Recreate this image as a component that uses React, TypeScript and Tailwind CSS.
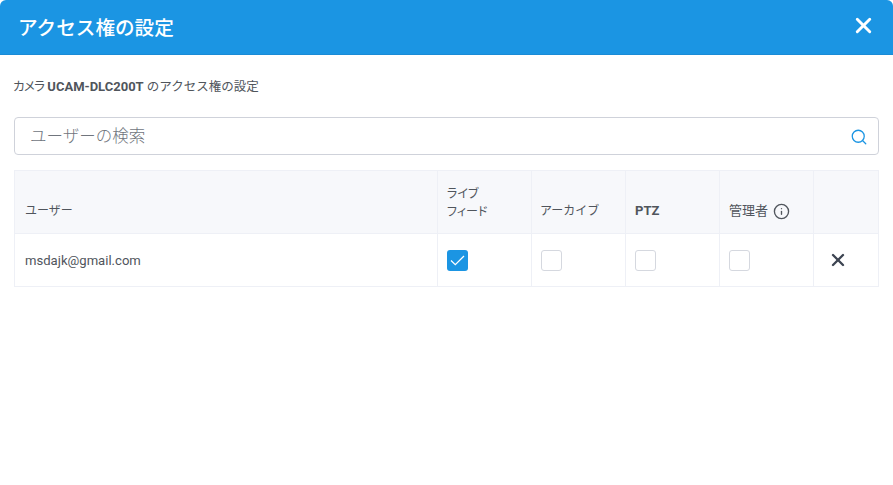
import { Info, Search, X } from 'lucide-react';

const CJK = `font-['Roboto','Noto_Sans_CJK_JP',sans-serif]`;

function Checkbox({ checked }: { checked?: boolean }) {
  return checked ? (
    <div className="w-[21px] h-[21px] rounded-[3px] bg-[#1b95e3] flex items-center justify-center">
      <svg width="15" height="11" viewBox="0 0 15 11" fill="none" stroke="white" strokeWidth="1.3">
        <path d="M1 5.5 L5.3 9.6 L14 1" />
      </svg>
    </div>
  ) : (
    <div className="w-[21px] h-[21px] rounded-[3px] bg-white border border-[#d5d8df]" />
  );
}

const COLUMNS = [
  { id: 'live', checked: true },
  { id: 'archive', checked: false },
  { id: 'ptz', checked: false },
  { id: 'admin', checked: false },
];

export default function App() {
  return (
    <div className={`w-[893px] h-[485px] bg-white overflow-hidden rounded-t-[6px] text-[#50555c] ${CJK}`}>
      {/* Header */}
      <div className="h-[55px] bg-[#1b95e3] border-b border-[#1a8bd6] flex items-center justify-between pl-[18px] pr-[17px]">
        <h1 className="text-[19.6px] font-medium text-white pt-[3px]">アクセス権の設定</h1>
        <X size={25} strokeWidth={2.8} className="text-white -mt-[4px]" />
      </div>

      <div className="px-[14px]">
        <p className="text-[12.5px] h-[16px] leading-[16px] mt-[24px] -ml-[1px]">
          <span className="[font-feature-settings:'palt'] tracking-[-0.7px]">カメラ</span>{' '}
          <span className="font-bold text-[13px]">UCAM-DLC200T</span> のアクセス権の設定
        </p>

        {/* Search */}
        <div className="mt-[22px] h-[38px] rounded-[4px] border border-[#cfd2da] flex items-center justify-between pl-[15px] pr-[10px]">
          <span className="text-[16.5px] font-light text-[#70757d] pt-[2px]">ユーザーの検索</span>
          <Search size={18} strokeWidth={1.7} className="text-[#1b95e3] mt-[1px]" />
        </div>

        {/* Table */}
        <div className="mt-[15px] w-[865px] border border-[#eef0f6] text-[12px]">
          <div className="h-[63px] flex bg-[#f7f8fb] border-b border-[#eef0f6]">
            <div className="w-[422px] flex items-center pl-[10px] pt-[18px]">ユーザー</div>
            <div className="w-[94px] border-l border-[#eef0f6] pl-[9px] pt-[14px] leading-[18px] [font-feature-settings:'palt']">
              ライブ
              <br />
              フィード
            </div>
            <div className="w-[94px] border-l border-[#eef0f6] pl-[8px] flex items-center pt-[18px]">アーカイブ</div>
            <div className="w-[94px] border-l border-[#eef0f6] pl-[9px] flex items-center pt-[18px] font-bold text-[13px]">PTZ</div>
            <div className="w-[94px] border-l border-[#eef0f6] pl-[9px] flex items-center pt-[18px] gap-[5px] text-[13px]">
              管理者 <Info size={17} strokeWidth={1.9} />
            </div>
            <div className="flex-1 border-l border-[#eef0f6]" />
          </div>
          <div className="h-[52px] flex">
            <div className="w-[422px] flex items-center pl-[10px] pt-[2px] text-[13.1px]">msdajk@gmail.com</div>
            {COLUMNS.map((col) => (
              <div key={col.id} className="w-[94px] border-l border-[#eef0f6] pl-[9px] flex items-center">
                <Checkbox checked={col.checked} />
              </div>
            ))}
            <div className="flex-1 border-l border-[#eef0f6] pl-[14px] flex items-center">
              <X size={20} strokeWidth={2.8} className="text-[#3d4552]" />
            </div>
          </div>
        </div>
      </div>
    </div>
  );
}
